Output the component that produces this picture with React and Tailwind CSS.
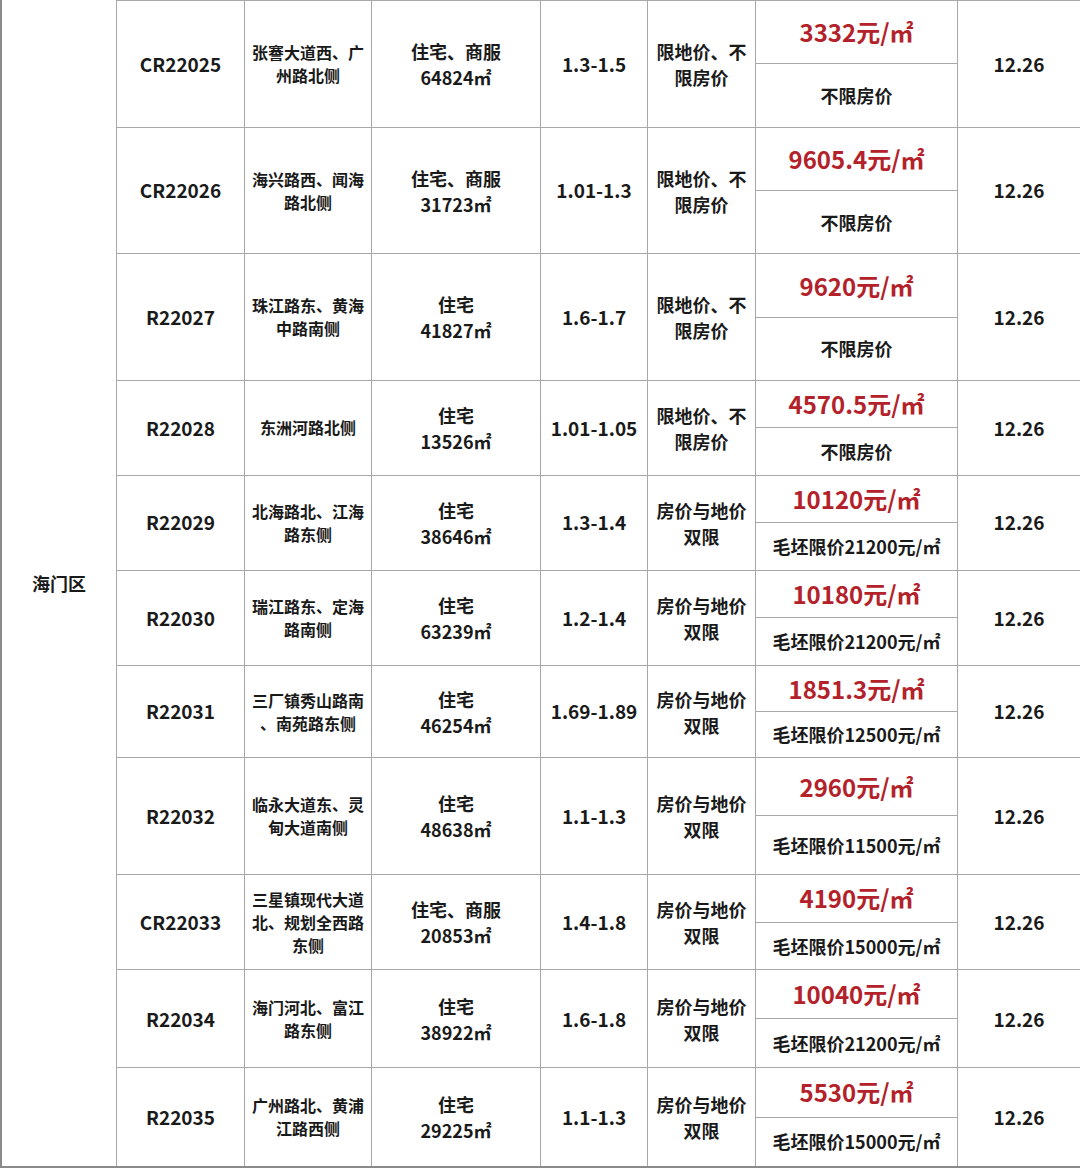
import React from "react";

// 海门区 land auction rows
const rows = [
  { h: 127, id: "CR22025", addr: ["张謇大道西、广", "州路北侧"], use: ["住宅、商服", "64824㎡"], ratio: "1.3-1.5", mode: ["限地价、不", "限房价"], price: "3332元/㎡", cap: "不限房价" },
  { h: 127, id: "CR22026", addr: ["海兴路西、闻海", "路北侧"], use: ["住宅、商服", "31723㎡"], ratio: "1.01-1.3", mode: ["限地价、不", "限房价"], price: "9605.4元/㎡", cap: "不限房价" },
  { h: 127, id: "R22027", addr: ["珠江路东、黄海", "中路南侧"], use: ["住宅", "41827㎡"], ratio: "1.6-1.7", mode: ["限地价、不", "限房价"], price: "9620元/㎡", cap: "不限房价" },
  { h: 95, id: "R22028", addr: ["东洲河路北侧"], use: ["住宅", "13526㎡"], ratio: "1.01-1.05", mode: ["限地价、不", "限房价"], price: "4570.5元/㎡", cap: "不限房价" },
  { h: 95, id: "R22029", addr: ["北海路北、江海", "路东侧"], use: ["住宅", "38646㎡"], ratio: "1.3-1.4", mode: ["房价与地价", "双限"], price: "10120元/㎡", cap: "毛坯限价21200元/㎡" },
  { h: 96, id: "R22030", addr: ["瑞江路东、定海", "路南侧"], use: ["住宅", "63239㎡"], ratio: "1.2-1.4", mode: ["房价与地价", "双限"], price: "10180元/㎡", cap: "毛坯限价21200元/㎡" },
  { h: 92, id: "R22031", addr: ["三厂镇秀山路南", "、南苑路东侧"], use: ["住宅", "46254㎡"], ratio: "1.69-1.89", mode: ["房价与地价", "双限"], price: "1851.3元/㎡", cap: "毛坯限价12500元/㎡" },
  { h: 117, id: "R22032", addr: ["临永大道东、灵", "甸大道南侧"], use: ["住宅", "48638㎡"], ratio: "1.1-1.3", mode: ["房价与地价", "双限"], price: "2960元/㎡", cap: "毛坯限价11500元/㎡" },
  { h: 96, id: "CR22033", addr: ["三星镇现代大道", "北、规划全西路", "东侧"], use: ["住宅、商服", "20853㎡"], ratio: "1.4-1.8", mode: ["房价与地价", "双限"], price: "4190元/㎡", cap: "毛坯限价15000元/㎡" },
  { h: 98, id: "R22034", addr: ["海门河北、富江", "路东侧"], use: ["住宅", "38922㎡"], ratio: "1.6-1.8", mode: ["房价与地价", "双限"], price: "10040元/㎡", cap: "毛坯限价21200元/㎡" },
  { h: 98, id: "R22035", addr: ["广州路北、黄浦", "江路西侧"], use: ["住宅", "29225㎡"], ratio: "1.1-1.3", mode: ["房价与地价", "双限"], price: "5530元/㎡", cap: "毛坯限价15000元/㎡" },
];

const cell = "flex flex-col items-center justify-center text-center border-l border-[#a8a8a8]";

const Row = ({ r, last }) => (
  <div
    className={`flex ${last ? "" : "border-b border-[#a8a8a8]"}`}
    style={{ height: r.h }}
  >
    <div className={`${cell} w-[128px] text-[19px]`}>{r.id}</div>
    <div className={`${cell} w-[127px] text-[16px] leading-[23px]`}>
      {r.addr.map((l) => (
        <div key={l}>{l}</div>
      ))}
    </div>
    <div className={`${cell} w-[169px] text-[18px] leading-[26px]`}>
      {r.use.map((l) => (
        <div key={l}>{l}</div>
      ))}
    </div>
    <div className={`${cell} w-[107px] text-[19px]`}>{r.ratio}</div>
    <div className={`${cell} w-[108px] text-[18px] leading-[26px]`}>
      {r.mode.map((l) => (
        <div key={l}>{l}</div>
      ))}
    </div>
    <div className="flex flex-col w-[202px] border-l border-[#a8a8a8]">
      <div className="flex-1 flex items-center justify-center border-b border-[#a8a8a8] text-[24px] text-[#b3222a]">
        {r.price}
      </div>
      <div className="flex-1 flex items-center justify-center text-[18px]">
        {r.cap}
      </div>
    </div>
    <div className={`${cell} flex-1 text-[19px]`}>12.26</div>
  </div>
);

export default function App() {
  return (
    <div className="w-[1080px] h-[1168px] bg-white flex border-l-2 border-b-2 border-[#8a8a8a] font-['Noto_Sans_CJK_SC',sans-serif] font-bold text-[#1a1a1a]">
      <div className="w-[114px] flex items-center justify-center text-[18px]">
        海门区
      </div>
      <div className="flex-1 flex flex-col border-t border-[#a8a8a8]">
        {rows.map((r, i) => (
          <Row key={r.id} r={r} last={i === rows.length - 1} />
        ))}
      </div>
    </div>
  );
}
